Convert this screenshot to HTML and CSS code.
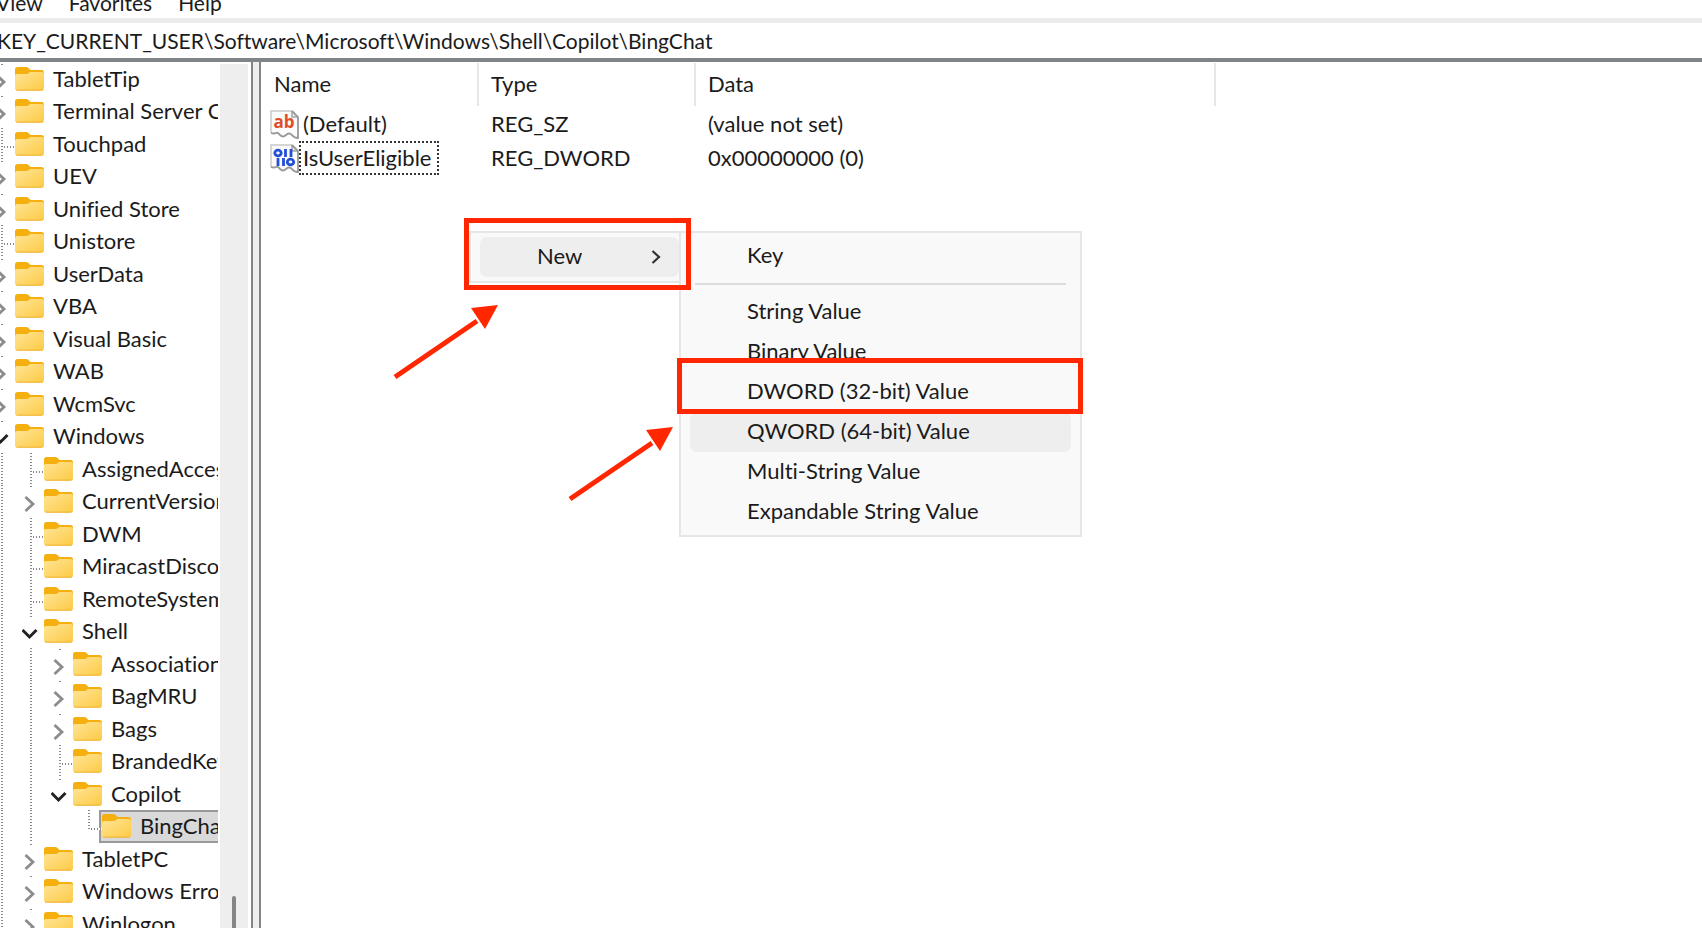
FILE: index.html
```html
<!DOCTYPE html>
<html lang="en">
<head>
  <meta charset="UTF-8" />
  <meta name="viewport" content="width=device-width, initial-scale=1.0" />
  <title>Registry Editor</title>
  <link rel="stylesheet" href="styles.css">
</head>

<body>
  <!-- Shared icons -->
  <svg class="sprite" aria-hidden="true">
    <defs>
      <linearGradient id="folderFill" x1="0" y1="0" x2="1" y2="1">
        <stop offset="0" stop-color="#ffe596" />
        <stop offset="1" stop-color="#fdca45" />
      </linearGradient>
      <symbol id="folder" viewBox="0 0 29 24">
        <path d="M0 9V2.500Q0 0 2.500 0H11Q12.500 0 13.500 1L15.500 3H26.500Q29 3 29 5.500V10H0Z" fill="#f5b010" />
        <path d="M0 9Q0 7 2 7H11.500Q13 7 14 6L15 5H27Q29 5 29 7V21.500Q29 23.500 27 23.500H2Q0 23.500 0 21.500Z" fill="url(#folderFill)" />
        <path d="M1 22.500Q1.500 23.200 2.500 23.200H26.500Q27.500 23.200 28 22.500" fill="none" stroke="#eeb02c" />
      </symbol>
      <symbol id="right" viewBox="0 0 16 20">
        <path d="M3.500 3L11 10L3.500 17" fill="none" stroke="#8c8c8c" stroke-width="2.800" />
      </symbol>
      <symbol id="down" viewBox="0 0 16 20">
        <path d="M.5 6L7.500 13L14.500 6" fill="none" stroke="#222" stroke-width="3" />
      </symbol>
      <symbol id="page" viewBox="0 0 29 29">
        <path d="M1 1H22L28 7V28Q24 28 22 25Q19 22 16 25Q13 28 10 25Q8 22 6 23Q4 24 1 23Z" fill="#fbfbfb" />
        <path d="M1 23V1H22" fill="none" stroke="#c9c9c9" stroke-width="1.500" />
        <path d="M22 1V7H28" fill="#eee" stroke="#a5a5a5" stroke-width="1.500" />
        <path d="M22 1L28 7V28Q24 28 22 25Q19 22 16 25Q13 28 10 25Q8 22 6 23Q4 24 1 23" fill="none" stroke="#989898" stroke-width="1.800" />
      </symbol>
    </defs>
  </svg>

  <div class="window">
    <nav class="menubar">
      <button type="button" class="menubar-item">View</button>
      <button type="button" class="menubar-item">Favorites</button>
      <button type="button" class="menubar-item">Help</button>
    </nav>

    <input class="address" type="text" aria-label="Address" value="KEY_CURRENT_USER\Software\Microsoft\Windows\Shell\Copilot\BingChat" />

    <div class="panes">
      <!-- Key tree -->
      <aside class="tree-pane">
        <ul class="tree">
          <li class="node"><span class="cell arrow"><svg><use href="#right" /></svg></span><svg class="folder"><use href="#folder" /></svg><span class="label">TabletTip</span></li>
          <li class="node"><span class="cell arrow"><svg><use href="#right" /></svg></span><svg class="folder"><use href="#folder" /></svg><span class="label">Terminal Server Client</span></li>
          <li class="node"><span class="cell line tee"></span><svg class="folder"><use href="#folder" /></svg><span class="label">Touchpad</span></li>
          <li class="node"><span class="cell arrow"><svg><use href="#right" /></svg></span><svg class="folder"><use href="#folder" /></svg><span class="label">UEV</span></li>
          <li class="node"><span class="cell arrow"><svg><use href="#right" /></svg></span><svg class="folder"><use href="#folder" /></svg><span class="label">Unified Store</span></li>
          <li class="node"><span class="cell line tee"></span><svg class="folder"><use href="#folder" /></svg><span class="label">Unistore</span></li>
          <li class="node"><span class="cell arrow"><svg><use href="#right" /></svg></span><svg class="folder"><use href="#folder" /></svg><span class="label">UserData</span></li>
          <li class="node"><span class="cell arrow"><svg><use href="#right" /></svg></span><svg class="folder"><use href="#folder" /></svg><span class="label">VBA</span></li>
          <li class="node"><span class="cell arrow"><svg><use href="#right" /></svg></span><svg class="folder"><use href="#folder" /></svg><span class="label">Visual Basic</span></li>
          <li class="node"><span class="cell arrow"><svg><use href="#right" /></svg></span><svg class="folder"><use href="#folder" /></svg><span class="label">WAB</span></li>
          <li class="node"><span class="cell arrow"><svg><use href="#right" /></svg></span><svg class="folder"><use href="#folder" /></svg><span class="label">WcmSvc</span></li>
          <li class="node"><span class="cell arrow"><svg><use href="#down" /></svg></span><svg class="folder"><use href="#folder" /></svg><span class="label">Windows</span></li>

          <!-- Windows -->
          <li class="node"><span class="cell line"></span><span class="cell line tee"></span><svg class="folder"><use href="#folder" /></svg><span class="label">AssignedAccessConfiguration</span></li>
          <li class="node"><span class="cell line"></span><span class="cell arrow"><svg><use href="#right" /></svg></span><svg class="folder"><use href="#folder" /></svg><span class="label">CurrentVersion</span></li>
          <li class="node"><span class="cell line"></span><span class="cell line tee"></span><svg class="folder"><use href="#folder" /></svg><span class="label">DWM</span></li>
          <li class="node"><span class="cell line"></span><span class="cell line tee"></span><svg class="folder"><use href="#folder" /></svg><span class="label">MiracastDiscovery</span></li>
          <li class="node"><span class="cell line"></span><span class="cell line tee"></span><svg class="folder"><use href="#folder" /></svg><span class="label">RemoteSystems</span></li>
          <li class="node"><span class="cell line"></span><span class="cell arrow"><svg><use href="#down" /></svg></span><svg class="folder"><use href="#folder" /></svg><span class="label">Shell</span></li>

          <!-- Shell -->
          <li class="node"><span class="cell line"></span><span class="cell line"></span><span class="cell arrow"><svg><use href="#right" /></svg></span><svg class="folder"><use href="#folder" /></svg><span class="label">Associations</span></li>
          <li class="node"><span class="cell line"></span><span class="cell line"></span><span class="cell arrow"><svg><use href="#right" /></svg></span><svg class="folder"><use href="#folder" /></svg><span class="label">BagMRU</span></li>
          <li class="node"><span class="cell line"></span><span class="cell line"></span><span class="cell arrow"><svg><use href="#right" /></svg></span><svg class="folder"><use href="#folder" /></svg><span class="label">Bags</span></li>
          <li class="node"><span class="cell line"></span><span class="cell line"></span><span class="cell line tee"></span><svg class="folder"><use href="#folder" /></svg><span class="label">BrandedKey</span></li>
          <li class="node"><span class="cell line"></span><span class="cell line"></span><span class="cell arrow"><svg><use href="#down" /></svg></span><svg class="folder"><use href="#folder" /></svg><span class="label">Copilot</span></li>
          <li class="node"><span class="cell line"></span><span class="cell line"></span><span class="cell"></span><span class="cell line tee last"></span><span class="selected"><svg class="folder"><use href="#folder" /></svg><span class="label">BingChat</span></span></li>

          <li class="node"><span class="cell line"></span><span class="cell arrow"><svg><use href="#right" /></svg></span><svg class="folder"><use href="#folder" /></svg><span class="label">TabletPC</span></li>
          <li class="node"><span class="cell line"></span><span class="cell arrow"><svg><use href="#right" /></svg></span><svg class="folder"><use href="#folder" /></svg><span class="label">Windows Error Reporting</span></li>
          <li class="node"><span class="cell line"></span><span class="cell arrow"><svg><use href="#right" /></svg></span><svg class="folder"><use href="#folder" /></svg><span class="label">Winlogon</span></li>
        </ul>
        <div class="scrollbar"><div class="thumb"></div></div>
      </aside>

      <!-- Values of the selected key -->
      <main class="values-pane">
        <table class="values">
          <thead>
            <tr><th>Name</th><th>Type</th><th class="col-data">Data</th><th class="col-rest"></th></tr>
          </thead>
          <tbody>
            <tr>
              <td>
                <div class="value-name">
                  <svg class="value-icon" viewBox="0 0 29 29">
                    <use href="#page" />
                    <text x="14" y="18" class="icon-text">ab</text>
                  </svg>
                  <span class="value-label">(Default)</span>
                </div>
              </td>
              <td>REG_SZ</td>
              <td>(value not set)</td>
              <td></td>
            </tr>
            <tr>
              <td>
                <div class="value-name">
                  <svg class="value-icon" viewBox="0 0 29 29">
                    <use href="#page" />
                    <g fill="none" stroke="#2450d8" stroke-width="2.800">
                      <ellipse cx="8" cy="9" rx="3.200" ry="2.800" />
                      <path d="M15.500 5V13M21 5V13M8 14V22M13.500 14V22" />
                      <ellipse cx="20.500" cy="18" rx="3.200" ry="2.800" />
                    </g>
                  </svg>
                  <span class="value-label focused">IsUserEligible</span>
                </div>
              </td>
              <td>REG_DWORD</td>
              <td>0x00000000 (0)</td>
              <td></td>
            </tr>
          </tbody>
        </table>

        <!-- Context menu -->
        <div class="menu context-menu">
          <button type="button" class="menu-item active">New
            <svg class="menu-arrow" viewBox="0 0 10 14"><path d="M1.500 1L8 7L1.500 13" fill="none" stroke="#333" stroke-width="2.200" /></svg>
          </button>
        </div>

        <div class="menu sub-menu">
          <button type="button" class="menu-item">Key</button>
          <hr class="menu-separator">
          <button type="button" class="menu-item">String Value</button>
          <button type="button" class="menu-item">Binary Value</button>
          <button type="button" class="menu-item">DWORD (32-bit) Value</button>
          <button type="button" class="menu-item active">QWORD (64-bit) Value</button>
          <button type="button" class="menu-item">Multi-String Value</button>
          <button type="button" class="menu-item">Expandable String Value</button>
        </div>

        <!-- Highlights -->
        <div class="mark mark-new"></div>
        <div class="mark mark-dword"></div>
        <svg class="pointer pointer-new" viewBox="0 0 106 76"><path d="M2 73L84 17" stroke="#ff2600" stroke-width="5" /><path d="M105 1L78 4L92 25Z" fill="#ff2600" /></svg>
        <svg class="pointer pointer-dword" viewBox="0 0 106 76"><path d="M2 73L84 17" stroke="#ff2600" stroke-width="5" /><path d="M105 1L78 4L92 25Z" fill="#ff2600" /></svg>
      </main>
    </div>
  </div>
</body>
</html>
```

FILE: styles.css
```css
:root {
  --text: #1b1b1b;
  --edge: #808489;
  --soft: #eeeeee;
  --rule: #e6e6e6;
  --menu-bg: #f9f9f9;
  --red: #ff2600;
}

* {
  box-sizing: border-box;
}

body {
  margin: 0;
  background: #fff;
  color: var(--text);
  font-family: Lato, sans-serif;
  font-size: 22px;
  font-variant-ligatures: none;
  overflow: hidden;
}

button,
input {
  font: inherit;
  color: inherit;
  border: none;
  background: none;
  padding: 0;
}

.sprite {
  position: absolute;
  width: 0;
  height: 0;
}

.window {
  display: flex;
  flex-direction: column;
  height: 100vh;
}

/* Menu bar and address */
.menubar {
  display: flex;
  align-items: flex-end;
  gap: 26px;
  height: 23px;
  margin-left: -4px;
  font-size: 21px;
  border-bottom: 5px solid #ececec;
}

.menubar-item {
  line-height: 30px;
}

.address {
  height: 39px;
  width: 100%;
  flex-shrink: 0;
  font-size: 21px;
  text-indent: -3px;
  border-bottom: 4px solid var(--edge);
  outline: none;
}

.panes {
  display: flex;
  flex: 1;
  min-height: 0;
}

/* Key tree */
.tree-pane {
  display: flex;
  width: 253px;
  flex-shrink: 0;
  border-right: 2px solid var(--edge);
  overflow: hidden;
}

.tree {
  list-style: none;
  width: 232px;
  margin: 0 0 0 -14px;
  padding: 1px 0 0;
  flex-shrink: 0;
  overflow: hidden;
}

.node {
  display: flex;
  height: 32px;
  white-space: nowrap;
}

.node:nth-child(even) {
  height: 33px;
}

.cell {
  position: relative;
  width: 29px;
  flex-shrink: 0;
}

.line {
  background: repeating-linear-gradient(#888 0 1px, #fff 1px 3px) 15px 0 / 2px 100% no-repeat;
}

.tee::after {
  content: "";
  position: absolute;
  left: 18px;
  right: 0;
  top: 18px;
  height: 2px;
  background: repeating-linear-gradient(90deg, #888 0 1px, #fff 1px 3px);
}

.last {
  background-size: 2px 19px;
}

.arrow {
  background: linear-gradient(#888, #888) 15px 1px / 2px 1px no-repeat;
}

.arrow svg {
  display: block;
  width: 16px;
  height: 20px;
  margin: 9px 0 0 7px;
}

.folder {
  width: 29px;
  height: 24px;
  margin-top: 4px;
  flex-shrink: 0;
}

.label {
  margin-left: 9px;
  line-height: 32px;
}

.selected {
  display: flex;
  flex: 1;
  margin-left: -3px;
  padding-left: 1px;
  background: #d9d9d9;
  border: 2px solid #999;
  border-right: none;
}

.selected .folder {
  margin-top: 2px;
}

.selected .label {
  line-height: 28px;
}

.scrollbar {
  display: flex;
  justify-content: center;
  align-items: flex-end;
  width: 28px;
  margin: 2px 0 0 2px;
  background: var(--soft);
}

.thumb {
  width: 4px;
  height: 32px;
  background: #858585;
  border-radius: 2px 2px 0 0;
}

/* Values */
.values-pane {
  position: relative;
  flex: 1;
  margin-left: 6px;
  padding-left: 1px;
  border-left: 2px solid var(--edge);
  box-shadow: -6px 0 0 var(--soft);
}

.values {
  width: 100%;
  table-layout: fixed;
  border-collapse: collapse;
}

.values th {
  width: 217px;
  height: 45px;
  padding: 0 0 3px 12px;
  font-weight: 400;
  text-align: left;
  background: linear-gradient(var(--rule), var(--rule)) right 1px / 2px 43px no-repeat;
}

.values th.col-data {
  width: 520px;
}

.values th.col-rest {
  width: auto;
  background: none;
}

.values td {
  height: 34px;
  padding: 0 0 0 12px;
  line-height: 30px;
}

.value-name {
  display: flex;
  align-items: center;
  margin-left: -4px;
}

.value-icon {
  width: 29px;
  height: 29px;
}

.icon-text {
  font-family: "Open Sans", sans-serif;
  font-size: 17px;
  font-weight: 700;
  fill: #e04e28;
  text-anchor: middle;
}

.value-label {
  border: 2px solid transparent;
  padding: 0 6px 0 2px;
}

.focused {
  border: 2px dotted #333;
}

/* Menus */
.menu {
  position: absolute;
  background: var(--menu-bg);
  border: 2px solid var(--rule);
}

.context-menu {
  left: 208px;
  top: 169px;
  width: 212px;
  padding: 4px 0 4px 9px;
}

.sub-menu {
  left: 418px;
  top: 169px;
  width: 403px;
  padding: 3px 9px;
}

.menu-item {
  display: flex;
  align-items: center;
  justify-content: space-between;
  width: 100%;
  height: 40px;
  padding: 0 18px 3px 57px;
  border-radius: 7px;
}

.menu-item.active {
  background: var(--soft);
}

.menu-arrow {
  width: 10px;
  height: 14px;
  margin-top: 3px;
}

.menu-separator {
  height: 2px;
  margin: 7px 5px;
  border: none;
  background: #dcdcdc;
}

/* Highlights */
.mark {
  position: absolute;
  border: 5px solid var(--red);
}

.mark-new {
  left: 203px;
  top: 156px;
  width: 227px;
  height: 72px;
}

.mark-dword {
  left: 416px;
  top: 296px;
  width: 406px;
  height: 56px;
}

.pointer {
  position: absolute;
  width: 106px;
  height: 76px;
}

.pointer-new {
  left: 132px;
  top: 242px;
}

.pointer-dword {
  left: 307px;
  top: 364px;
}
```
